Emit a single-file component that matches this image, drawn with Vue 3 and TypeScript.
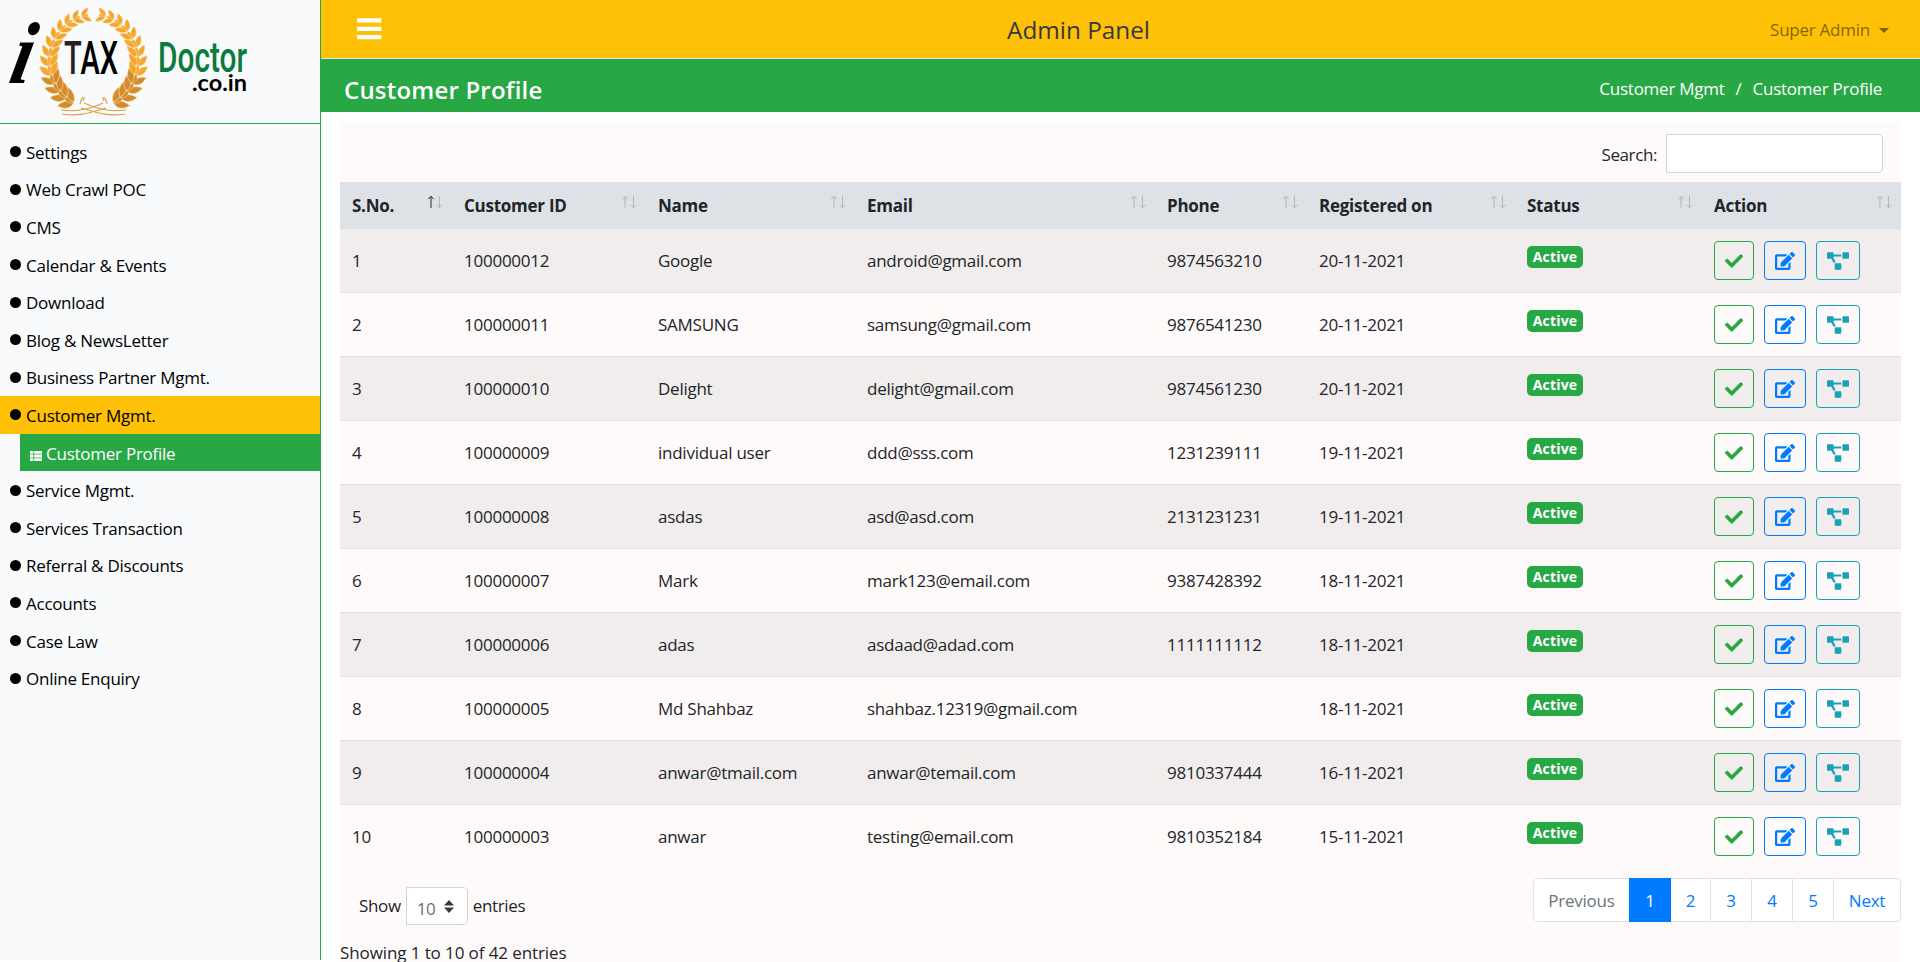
<script setup lang="ts">
interface Customer {
  id: string
  name: string
  email: string
  phone: string
  date: string
}

const menuTop: string[] = [
  'Settings', 'Web Crawl POC', 'CMS', 'Calendar & Events', 'Download',
  'Blog & NewsLetter', 'Business Partner Mgmt.',
]
const menuBottom: string[] = [
  'Service Mgmt.', 'Services Transaction', 'Referral & Discounts',
  'Accounts', 'Case Law', 'Online Enquiry',
]
const columns: string[] = [
  'S.No.', 'Customer ID', 'Name', 'Email', 'Phone', 'Registered on', 'Status', 'Action',
]
const customers: Customer[] = [
  { id: '100000012', name: 'Google', email: 'android@gmail.com', phone: '9874563210', date: '20-11-2021' },
  { id: '100000011', name: 'SAMSUNG', email: 'samsung@gmail.com', phone: '9876541230', date: '20-11-2021' },
  { id: '100000010', name: 'Delight', email: 'delight@gmail.com', phone: '9874561230', date: '20-11-2021' },
  { id: '100000009', name: 'individual user', email: 'ddd@sss.com', phone: '1231239111', date: '19-11-2021' },
  { id: '100000008', name: 'asdas', email: 'asd@asd.com', phone: '2131231231', date: '19-11-2021' },
  { id: '100000007', name: 'Mark', email: 'mark123@email.com', phone: '9387428392', date: '18-11-2021' },
  { id: '100000006', name: 'adas', email: 'asdaad@adad.com', phone: '1111111112', date: '18-11-2021' },
  { id: '100000005', name: 'Md Shahbaz', email: 'shahbaz.12319@gmail.com', phone: '', date: '18-11-2021' },
  { id: '100000004', name: 'anwar@tmail.com', email: 'anwar@temail.com', phone: '9810337444', date: '16-11-2021' },
  { id: '100000003', name: 'anwar', email: 'testing@email.com', phone: '9810352184', date: '15-11-2021' },
]

interface Leaf {
  transform: string
  low: boolean
}

// Leaves of the left half of the wreath; the right half is its mirror image.
const leaves: Leaf[] = []
const count = 13
for (let i = 0; i < count; i++) {
  const t = i / (count - 1)
  const deg = 116 + t * 138
  const a = (deg * Math.PI) / 180
  const x = 93.5 + 43.5 * Math.cos(a)
  const y = 61 + 46 * Math.sin(a)
  const size = 1.35 - 0.5 * t
  for (const side of [-1, 0, 1]) {
    const turn = deg + 90 + side * 38
    leaves.push({
      transform: `translate(${x.toFixed(1)} ${y.toFixed(1)}) rotate(${turn.toFixed(1)}) scale(${(size * (side === 0 ? 0.7 : 1)).toFixed(2)})`,
      low: i < 4,
    })
  }
}
</script>

<template>
  <div class="page">
    <aside class="sidebar">
      <div class="brand">
        <svg width="260" height="123" viewBox="0 0 260 123">
          <defs>
            <g id="half">
              <path
                v-for="(leaf, i) in leaves" :key="i" :transform="leaf.transform"
                d="M0.500 0C3.500 -4 8 -4.200 13 0C9 2.800 4 3 0.500 0Z" :class="leaf.low ? 'leaf low' : 'leaf'"
              />
              <path d="M61 110C74 112 88 110 103 103M62 114C80 117 92 112 106 108M80 104C82 95 86 97 83 101" fill="none" stroke="#dba04a" stroke-width="1.1" />
            </g>
          </defs>
          <use href="#half" />
          <use href="#half" transform="translate(187 0) scale(-1 1)" />
          <text class="logo-i" transform="translate(7 83) skewX(-12) scale(0.88 1)">i</text>
          <text class="logo-tax" x="64" y="74" textLength="54" lengthAdjust="spacingAndGlyphs"><tspan fill="#262223">T</tspan>AX</text>
          <text class="logo-doctor" x="158" y="72" textLength="89" lengthAdjust="spacingAndGlyphs">Doctor</text>
          <text class="logo-co" x="192" y="91" textLength="55" lengthAdjust="spacingAndGlyphs">.co.in</text>
        </svg>
      </div>
      <nav class="menu">
        <a v-for="item in menuTop" :key="item" class="item"><i class="dot"></i>{{ item }}</a>
        <a class="item current"><i class="dot"></i>Customer Mgmt.</a>
        <a class="item sub">
          <svg class="list" width="12" height="10" viewBox="0 0 12 10" fill="#fff">
            <path d="M0 0h3.4v2.8H0zM4.2 0H12v2.8H4.2zM0 3.6h3.4v2.8H0zM4.2 3.6H12v2.8H4.2zM0 7.2h3.4V10H0zM4.2 7.2H12V10H4.2z" />
          </svg>Customer Profile
        </a>
        <a v-for="item in menuBottom" :key="item" class="item"><i class="dot"></i>{{ item }}</a>
      </nav>
    </aside>

    <main class="main">
      <header class="topbar">
        <svg class="burger" width="25" height="22" viewBox="0 0 25 22" fill="#fff">
          <rect y="0.3" width="24.3" height="4.3" rx="0.7" />
          <rect y="8.8" width="24.3" height="4.3" rx="0.7" />
          <rect y="17" width="24.3" height="4.3" rx="0.7" />
        </svg>
        <div class="app-title">Admin Panel</div>
        <div class="user">Super Admin<i class="caret"></i></div>
      </header>
      <div class="titlebar">
        <h1>Customer Profile</h1>
        <div class="crumbs"><span>Customer Mgmt</span><span class="slash">/</span><span>Customer Profile</span></div>
      </div>

      <section class="card">
        <div class="search"><label>Search:</label><input type="text" /></div>
        <table>
          <colgroup>
            <col class="c1" /><col class="c2" /><col class="c3" /><col class="c4" />
            <col class="c5" /><col class="c6" /><col class="c7" /><col class="c8" />
          </colgroup>
          <thead>
            <tr>
              <th v-for="(col, i) in columns" :key="col">
                <div class="head">
                  <span>{{ col }}</span>
                  <svg width="16" height="14" viewBox="0 0 16 14" fill="none" stroke-width="1">
                    <path d="M4 13V1.5M1.2 4.2L4 1.2L6.8 4.2" :stroke="i === 0 ? '#2c2436' : '#b3b7bb'" />
                    <path d="M12.5 1V12.5M9.7 9.8L12.5 12.8L15.3 9.8" stroke="#b3b7bb" />
                  </svg>
                </div>
              </th>
            </tr>
          </thead>
          <tbody>
            <tr v-for="(c, i) in customers" :key="c.id">
              <td>{{ i + 1 }}</td>
              <td>{{ c.id }}</td>
              <td>{{ c.name }}</td>
              <td>{{ c.email }}</td>
              <td>{{ c.phone }}</td>
              <td>{{ c.date }}</td>
              <td><span class="badge">Active</span></td>
              <td>
                <div class="actions">
                  <button class="btn check">
                    <svg width="18" height="18" viewBox="0 0 512 512" fill="currentColor"><path d="M173.898 439.404l-166.4-166.4c-9.997-9.997-9.997-26.206 0-36.204l36.203-36.204c9.997-9.998 26.207-9.998 36.204 0L192 312.69 432.095 72.596c9.997-9.997 26.207-9.997 36.204 0l36.203 36.204c9.997 9.997 9.997 26.206 0 36.204l-294.4 294.401c-9.998 9.997-26.207 9.997-36.204-.001z" /></svg>
                  </button>
                  <button class="btn edit">
                    <svg width="20" height="18" viewBox="0 0 576 512" fill="currentColor"><path d="M402.6 83.2l90.2 90.2c3.8 3.8 3.8 10 0 13.8L274.4 405.6l-92.8 10.3c-12.4 1.4-22.9-9.1-21.5-21.5l10.3-92.8L388.8 83.2c3.8-3.8 10-3.8 13.8 0zm162-22.9l-48.8-48.8c-15.2-15.2-39.9-15.2-55.2 0l-35.4 35.4c-3.8 3.8-3.8 10 0 13.8l90.2 90.2c3.8 3.8 10 3.8 13.8 0l35.4-35.4c15.2-15.3 15.2-40 0-55.2zM384 346.2V448H64V128h229.8c3.2 0 6.2-1.3 8.5-3.5l40-40c7.6-7.6 2.2-20.5-8.5-20.5H48C21.5 64 0 85.5 0 112v352c0 26.5 21.5 48 48 48h352c26.5 0 48-21.5 48-48V306.2c0-10.7-12.9-16-20.5-8.5l-40 40c-2.2 2.3-3.5 5.3-3.5 8.5z" /></svg>
                  </button>
                  <button class="btn flow">
                    <svg width="22" height="18" viewBox="0 0 640 512" fill="currentColor"><path d="M384 320H256c-17.67 0-32 14.33-32 32v128c0 17.67 14.33 32 32 32h128c17.67 0 32-14.33 32-32V352c0-17.67-14.33-32-32-32zM192 32c0-17.67-14.33-32-32-32H32C14.33 0 0 14.33 0 32v128c0 17.67 14.33 32 32 32h95.72l73.16 128.04C211.98 300.98 232.4 288 256 288h.28L192 175.51V128h224V64H192V32zM608 0H480c-17.67 0-32 14.33-32 32v128c0 17.67 14.33 32 32 32h128c17.67 0 32-14.33 32-32V32c0-17.67-14.33-32-32-32z" /></svg>
                  </button>
                </div>
              </td>
            </tr>
          </tbody>
        </table>
        <div class="below">
          <div class="length">
            <span>Show</span>
            <span class="select">10
              <svg width="10" height="13" viewBox="0 0 10 13" fill="#343a40"><path d="M5 0L10 5.4H0zM0 7.6H10L5 13z" /></svg>
            </span>
            <span>entries</span>
          </div>
          <ul class="pages">
            <li class="prev">Previous</li>
            <li class="active">1</li>
            <li class="two">2</li>
            <li>3</li>
            <li>4</li>
            <li>5</li>
            <li class="next">Next</li>
          </ul>
        </div>
        <div class="info">Showing 1 to 10 of 42 entries</div>
      </section>
    </main>
  </div>
</template>

<style>
body {
  overflow: hidden;
}
</style>

<style scoped>
* {
  box-sizing: border-box;
}
.page {
  display: flex;
  width: 1920px;
  height: 962px;
  overflow: hidden;
  background: #fff;
  color: #212529;
  font-family: "Open Sans", "Noto Sans", sans-serif;
  font-size: 17px;
  letter-spacing: -0.25px;
  line-height: 26px;
}
.sidebar {
  flex: none;
  width: 321px;
  height: 960px;
  background: #f8fafc;
  border-right: 1px solid #28a745;
}
.brand {
  height: 124px;
  border-bottom: 1px solid #28a745;
}
.brand svg {
  display: block;
}
.leaf {
  fill: #f5a62b;
  stroke: #fbe0b4;
  stroke-width: 0.5;
}
.leaf.low {
  fill: #d28c2c;
}
.logo-i {
  font: italic bold 88px "Liberation Serif", serif;
}
.logo-tax {
  font: 500 46px Roboto, sans-serif;
  letter-spacing: 0;
}
.logo-doctor {
  font: 500 42px Roboto, sans-serif;
  letter-spacing: 0;
  fill: #0b7a3b;
}
.logo-co {
  font: bold 22px Lato, sans-serif;
  letter-spacing: 0;
}
.menu {
  padding-top: 9px;
}
.item {
  display: flex;
  align-items: center;
  height: 37.6px;
  padding: 2px 0 0 10px;
  color: #000;
}
.dot {
  width: 11px;
  height: 11px;
  margin: 0 5px 2px 0;
  border-radius: 50%;
  background: #000;
}
.current {
  background: #ffc107;
}
.sub {
  margin-left: 20px;
  background: #28a745;
  color: #fff;
}
.list {
  margin: 4px 4px 0 0;
}
.main {
  flex: 1;
  display: flex;
  flex-direction: column;
}
.topbar {
  display: flex;
  align-items: center;
  justify-content: space-between;
  height: 59px;
  padding: 0 31px 0 36px;
  background: #ffc107;
  border-bottom: 1px solid #dee2e6;
}
.burger {
  flex: none;
}
.app-title {
  padding: 1px 0 0 5px;
  font-size: 24.3px;
  font-weight: 500;
  letter-spacing: 0;
  color: #343a40;
}
.user {
  display: flex;
  align-items: center;
  padding-top: 2px;
  color: rgba(0, 0, 0, 0.5);
}
.caret {
  margin-left: 9px;
  border: 5px solid transparent;
  border-top-color: currentColor;
  border-bottom: 0;
}
.titlebar {
  display: flex;
  align-items: center;
  justify-content: space-between;
  height: 53px;
  padding: 8px 38px 0 23px;
  background: #28a745;
  color: #fff;
}
h1 {
  margin: 0;
  font-size: 24px;
  font-weight: 600;
  letter-spacing: 0.2px;
}
.crumbs {
  display: flex;
  margin-top: -2px;
}
.slash {
  margin: 0 11px;
}
.card {
  width: 1561px;
  height: 840px;
  margin: 10px 0 0 19px;
  background: #fffafa;
}
.search {
  display: flex;
  align-items: flex-start;
  justify-content: flex-end;
  gap: 9px;
  height: 60px;
  padding: 12px 18px 0 0;
}
.search label {
  padding-top: 8px;
  letter-spacing: -0.4px;
}
input {
  width: 217px;
  height: 39px;
  padding: 0 10px;
  border: 1px solid #ced4da;
  border-radius: 0 5px 5px 0;
  background: #fff;
}
table {
  width: 1561px;
  border-collapse: separate;
  border-spacing: 0;
  table-layout: fixed;
}
.c1 { width: 112px; }
.c2 { width: 194px; }
.c3 { width: 209px; }
.c4 { width: 300px; }
.c5 { width: 152px; }
.c6 { width: 208px; }
.c7 { width: 187px; }
.c8 { width: 199px; }
th {
  height: 47px;
  padding: 0 9px 0 12px;
  background: #dee2e6;
  text-align: left;
  font-weight: 700;
}
.head {
  display: flex;
  align-items: center;
  justify-content: space-between;
}
.head svg {
  margin-bottom: 7px;
}
td {
  height: 64px;
  padding: 0 12px;
  border-bottom: 1px solid #dee2e6;
}
tbody tr:nth-child(odd) {
  background: #f1eded;
}
tbody tr:last-child td {
  border-bottom-color: transparent;
}
.badge {
  display: flex;
  align-items: center;
  justify-content: center;
  width: 56px;
  height: 22px;
  margin-bottom: 7px;
  border-radius: 5px;
  background: #28a745;
  color: #fff;
  font-size: 14px;
  font-weight: 700;
  letter-spacing: 0.2px;
}
.actions {
  display: flex;
  gap: 10px;
}
.btn {
  display: flex;
  align-items: center;
  justify-content: center;
  height: 39px;
  padding: 0;
  border: 1px solid currentColor;
  border-radius: 4px;
  background: transparent;
}
.check {
  width: 40px;
  color: #28a745;
}
.edit {
  width: 42px;
  color: #007bff;
}
.flow {
  width: 44px;
  color: #17a2b8;
}
.below {
  display: flex;
  align-items: flex-start;
  justify-content: space-between;
  height: 71px;
  padding: 9px 0 0 19px;
}
.length {
  display: flex;
  align-items: center;
  gap: 5px;
  padding-top: 9px;
  letter-spacing: -0.35px;
}
.select {
  display: flex;
  align-items: center;
  gap: 8px;
  width: 62px;
  height: 38px;
  padding: 6px 0 0 10px;
  border: 1px solid #ced4da;
  border-radius: 0 5px 5px 0;
  background: #fff;
  color: #6a6f75;
}
.select svg {
  margin-bottom: 5px;
}
.pages {
  display: flex;
  margin: 0;
  padding: 0;
  height: 44px;
  list-style: none;
  border: 1px solid #dee2e6;
  border-radius: 5px;
  background: #fff;
  color: #007bff;
}
.pages li {
  display: flex;
  align-items: center;
  justify-content: center;
  width: 41px;
  padding-top: 1px;
  border-left: 1px solid #dee2e6;
}
.pages .prev {
  width: 95px;
  border: 0;
  color: #6c757d;
}
.pages .active {
  width: 42px;
  margin: -1px 0;
  border: 0;
  background: #007bff;
  color: #fff;
}
.pages .two {
  width: 39px;
  border: 0;
}
.pages .next {
  width: 67px;
}
.info {
  letter-spacing: -0.1px;
}
</style>
